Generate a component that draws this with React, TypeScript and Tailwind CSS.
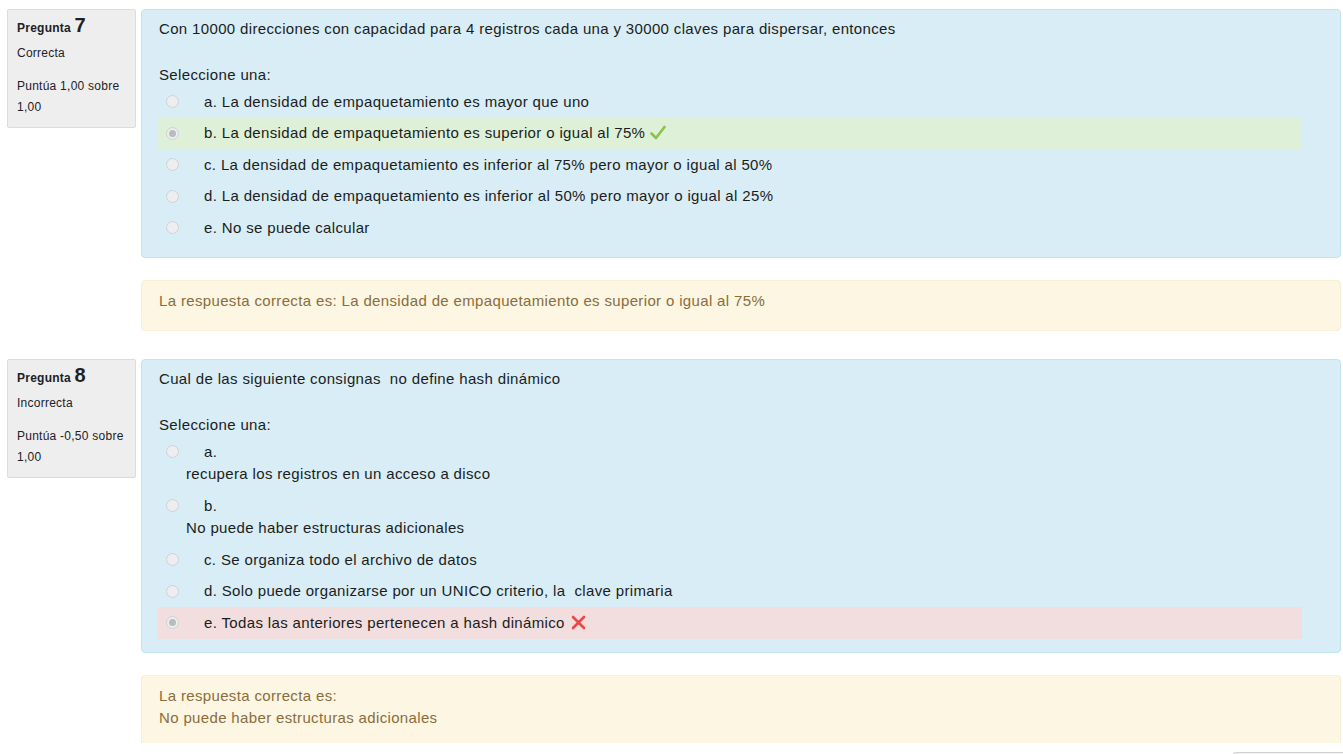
import React from "react";

type Opt = { label: string; text: string; multi?: boolean; state?: "right" | "wrong" };

function Radio({ checked }: { checked?: boolean }) {
  return (
    <span className="w-[13px] h-[13px] shrink-0 rounded-full border border-[#cfd2d4] bg-[#eceef0] flex items-center justify-center">
      {checked && <span className="w-[7px] h-[7px] rounded-full bg-[#b9bcbe]" />}
    </span>
  );
}

function Check() {
  return (
    <svg width="16" height="15" viewBox="0 0 16 15" className="inline-block ml-[5px] -mt-[3px] align-middle">
      <path d="M1.5 8.5 L6 13 L14.5 2" fill="none" stroke="#8bc34a" strokeWidth="2.6" strokeLinecap="round" strokeLinejoin="round" />
    </svg>
  );
}

function Cross() {
  return (
    <svg width="15" height="15" viewBox="0 0 15 15" className="inline-block ml-[6px] -mt-[3px] align-middle">
      <path d="M2 2 L13 13 M13 2 L2 13" fill="none" stroke="#f44343" strokeWidth="2.6" strokeLinecap="round" />
    </svg>
  );
}

function Option({ o }: { o: Opt }) {
  const bg = o.state === "right" ? "bg-[#dff0d8]" : o.state === "wrong" ? "bg-[#f2dede]" : "";
  const checked = !!o.state;
  if (o.multi) {
    return (
      <div className={`py-[4.5px] pl-[9px] ${bg}`}>
        <div className="flex items-center h-[22.5px]">
          <Radio checked={checked} />
          <span className="ml-[25px]">{o.label}</span>
        </div>
        <div className="h-[22.5px] pl-[20px]">{o.text}</div>
      </div>
    );
  }
  return (
    <div className={`h-[31.5px] flex items-center pl-[9px] ${bg}`}>
      <Radio checked={checked} />
      <span className="ml-[25px] whitespace-pre">
        {o.label} {o.text}
        {o.state === "right" && <Check />}
        {o.state === "wrong" && <Cross />}
      </span>
    </div>
  );
}

function Info({ n, state, grade }: { n: number; state: string; grade: string }) {
  return (
    <div className="w-[129px] h-[119px] shrink-0 rounded-[2px] border border-[#dcdcdc] bg-[#eeeeee] pl-[9px] pr-[6px] pt-[5px] text-[12px] tracking-[0.25px] text-[#1d2125]">
      <div className="leading-[20px] h-[22.8px]">
        <span className="font-bold">Pregunta </span>
        <span className="font-bold text-[20px] leading-[20px]">{n}</span>
      </div>
      <div className="mt-[5.3px] leading-[21.5px]">{state}</div>
      <div className="mt-[11px] leading-[21.5px]">{grade}</div>
    </div>
  );
}

function Question({
  n,
  state,
  grade,
  text,
  opts,
  fb,
  fbH,
}: {
  n: number;
  state: string;
  grade: string;
  text: string;
  opts: Opt[];
  fb: React.ReactNode;
  fbH: string;
}) {
  return (
    <div className="flex items-start">
      <Info n={n} state={state} grade={grade} />
      <div className="ml-[5px] w-[1200px] tracking-[0.35px]">
        <div className="rounded-[4px] border border-[#bee5f0] bg-[#d9edf7] pl-[15px] pr-[38px] pt-[7.5px] pb-[13.5px]">
          <div className="pl-[2px] leading-[22.5px] whitespace-pre">{text}</div>
          <div className="pl-[2px] mt-[23.5px] leading-[22.5px]">Seleccione una:</div>
          <div>
            {opts.map((o) => (
              <Option key={o.label} o={o} />
            ))}
          </div>
        </div>
        <div
          className={`mt-[22px] rounded-[4px] border border-[#faefd6] bg-[#fcf6e3] pl-[17px] pt-[8.5px] leading-[22.5px] text-[#8a6d3b] ${fbH}`}
        >
          {fb}
        </div>
      </div>
    </div>
  );
}

export default function App() {
  return (
    <div
      className="bg-white min-h-[754px] pl-[7px] pt-[9px] text-[15px] text-[#1a1d20]"
      style={{ fontFamily: '"Liberation Sans", Arial, sans-serif' }}
    >
      <Question
        n={7}
        state="Correcta"
        grade="Puntúa 1,00 sobre 1,00"
        text="Con 10000 direcciones con capacidad para 4 registros cada una y 30000 claves para dispersar, entonces"
        opts={[
          { label: "a.", text: "La densidad de empaquetamiento es mayor que uno" },
          { label: "b.", text: "La densidad de empaquetamiento es superior o igual al 75%", state: "right" },
          { label: "c.", text: "La densidad de empaquetamiento es inferior al 75% pero mayor o igual al 50%" },
          { label: "d.", text: "La densidad de empaquetamiento es inferior al 50% pero mayor o igual al 25%" },
          { label: "e.", text: "No se puede calcular" },
        ]}
        fb={<div>La respuesta correcta es: La densidad de empaquetamiento es superior o igual al 75%</div>}
        fbH="h-[51px]"
      />
      <div className="h-[28px]" />
      <Question
        n={8}
        state="Incorrecta"
        grade="Puntúa -0,50 sobre 1,00"
        text="Cual de las siguiente consignas  no define hash dinámico"
        opts={[
          { label: "a.", text: "recupera los registros en un acceso a disco", multi: true },
          { label: "b.", text: "No puede haber estructuras adicionales", multi: true },
          { label: "c.", text: "Se organiza todo el archivo de datos" },
          { label: "d.", text: "Solo puede organizarse por un UNICO criterio, la  clave primaria" },
          { label: "e.", text: "Todas las anteriores pertenecen a hash dinámico", state: "wrong" },
        ]}
        fb={
          <>
            <div>La respuesta correcta es:</div>
            <div>No puede haber estructuras adicionales</div>
          </>
        }
        fbH="h-[68px] border-b-0 rounded-b-none"
      />
      <div className="flex justify-end mt-[9px]">
        <div className="w-[110px] h-[30px] border border-r-0 border-[#d0d0d0] rounded-l-[3px] bg-[#f5f5f5]" />
      </div>
    </div>
  );
}
